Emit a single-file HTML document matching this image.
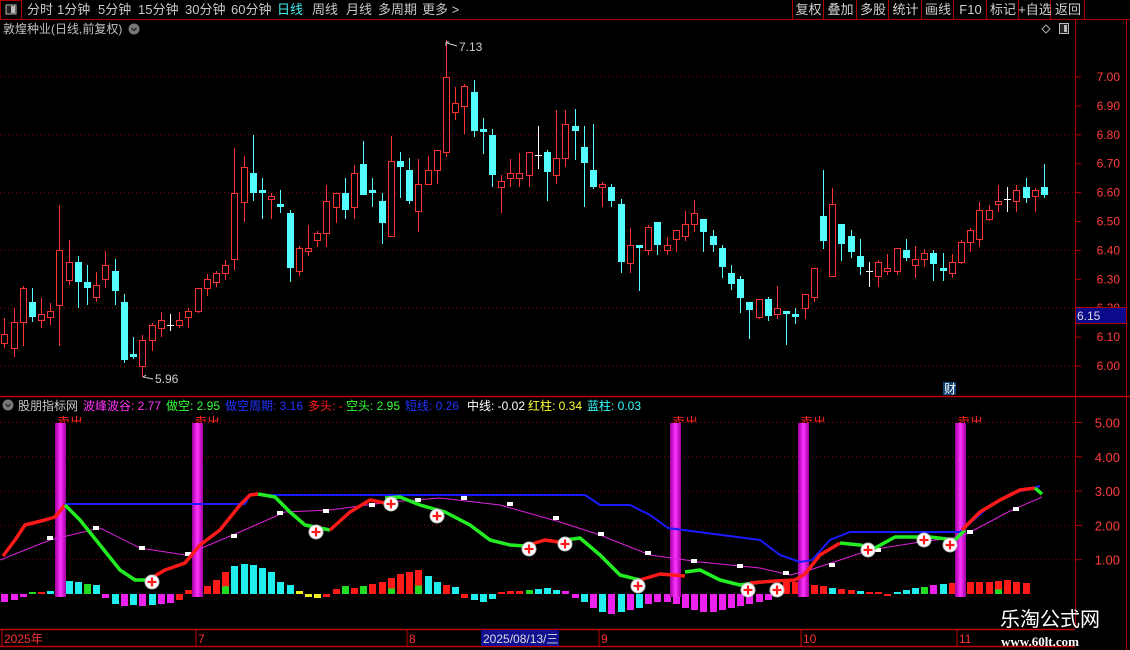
<!DOCTYPE html>
<html><head><meta charset="utf-8">
<style>
*{margin:0;padding:0;box-sizing:border-box}
body{width:1130px;height:650px;background:#000;overflow:hidden;font-family:"Liberation Sans","Noto Sans CJK SC",sans-serif;position:relative;color:#c8c8c8}
</style></head><body>
<svg id="s" width="1130" height="650" style="position:absolute;left:0;top:0" xmlns="http://www.w3.org/2000/svg" font-family="Liberation Sans, Noto Sans CJK SC, sans-serif"></svg>
<script>
var S=document.getElementById('s'),o=[];
function r(x,y,w,h,f,st){o.push('<rect x="'+x+'" y="'+y+'" width="'+w+'" height="'+h+'" fill="'+f+'"'+(st?' stroke="'+st+'" stroke-width="1"':'')+'/>');}
function l(x1,y1,x2,y2,c,w,d){o.push('<line x1="'+x1+'" y1="'+y1+'" x2="'+x2+'" y2="'+y2+'" stroke="'+c+'" stroke-width="'+(w||1)+'"'+(d?' stroke-dasharray="'+d+'"':'')+'/>');}
function t(x,y,s,c,fs,anc,ex){o.push('<text x="'+x+'" y="'+y+'" fill="'+c+'" font-size="'+(fs||12)+'"'+(anc?' text-anchor="'+anc+'"':'')+(ex||'')+'>'+s+'</text>');}
o.push('<defs><linearGradient id="mg" x1="0" x2="1"><stop offset="0" stop-color="#a000a0"/><stop offset=".5" stop-color="#ff33ff"/><stop offset="1" stop-color="#a000a0"/></linearGradient><clipPath id="cp"><rect x="0" y="398" width="1075" height="25"/></clipPath></defs>');
l(0,19.5,1130,19.5,'#b00000');
r(0.5,0.5,21,19,'none','#b00000');
r(6,5,10,9,'#222','#bbb');r(11,6,4,7,'#bbb');
var tb=[['分时',27],['1分钟',57],['5分钟',98],['15分钟',138],['30分钟',185],['60分钟',231],['日线',277,'#4ee'],['周线',312],['月线',346],['多周期',378],['更多 >',422]];
tb.forEach(function(a){t(a[1],14,a[0],a[2]||'#c8c8c8',13);});
var sep=[792,823,856,888,921,953,986,1018,1050,1084];
sep.forEach(function(x){l(x+.5,0,x+.5,19,'#b00000');});
var bt=['复权','叠加','多股','统计','画线','F10','标记','+自选','返回'];
bt.forEach(function(b,i){t((sep[i]+sep[i+1])/2+1,14,b,'#d0d0d0',13,'middle');});
l(1075.5,20,1075.5,628,'#b00000');l(1126.5,20,1126.5,650,'#b00000');
l(0,396.5,1130,396.5,'#c00000',1.5);
t(3,33,'敦煌种业(日线,前复权)','#c0c0c0',12);
o.push('<circle cx="134" cy="29" r="5.5" fill="#777"/><path d="M131.5,28 L134,30.5 L136.5,28" stroke="#222" fill="none" stroke-width="1.3"/>');
o.push('<path d="M1046,25 L1050,29 L1046,33 L1042,29Z" fill="none" stroke="#aaa"/>');
r(1059.5,23.5,9,10,'#222','#bbb');r(1064,25,3,7,'#bbb');
function py(p){return 366-(p-6)*289;}
[6,6.2,6.4,6.6,6.8,7].forEach(function(p){l(0,py(p),1075,py(p),'#8a0000',1,'1 3');});
for(var p=6;p<=7.01;p+=0.1){var y=py(p);t(1120,y+4,p.toFixed(2),'#ff3c3c',12,'end');l(1075,y,1081,y,'#b00000');}
r(1075.5,307.5,51,16,'#0a0a8a','#b00000');t(1077,320,'6.15','#ddd',12);
var C=[[334,343,318,348,'r'],[322,348,308,357,'r'],[288,322,286,346,'r'],[302,317,288,322,'c'],[314,320,298,328,'r'],[311,317,303,325,'r'],[250,305,205,346,'r'],[262,280,240,285,'r'],[262,282,256,308,'c'],[282,288,265,305,'c'],[285,297,272,302,'r'],[265,279,251,288,'r'],[271,291,259,305,'c'],[302,360,294,363,'c'],[354,357,337,359,'c'],[340,366,335,377,'r'],[325,340,323,351,'r'],[320,328,312,337,'r'],[325,325,314,331,'w'],[320,325,312,328,'r'],[311,317,308,328,'r'],[288,311,288,313,'r'],[279,288,274,296,'r'],[273,282,271,287,'r'],[265,273,260,280,'r'],[193,259,148,270,'r'],[167,202,156,222,'r'],[173,193,135,201,'c'],[190,193,178,219,'c'],[196,199,193,219,'r'],[204,207,190,213,'c'],[213,268,210,282,'c'],[248,271,246,276,'r'],[248,251,225,256,'r'],[233,240,231,247,'r'],[201,233,185,247,'r'],[193,207,193,223,'r'],[193,210,178,219,'c'],[173,207,165,219,'r'],[164,195,141,195,'c'],[190,193,178,207,'c'],[201,223,193,244,'c'],[161,236,136,236,'r'],[161,167,152,198,'c'],[170,201,158,204,'c'],[184,211,159,232,'r'],[170,184,156,184,'r'],[150,170,150,184,'r'],[77,152,40,157,'r'],[103,112,87,120,'r'],[86,106,84,134,'r'],[92,131,80,137,'c'],[129,131,118,154,'c'],[135,175,129,187,'c'],[181,187,175,213,'r'],[173,178,159,187,'r'],[173,178,153,187,'r'],[152,175,152,187,'r'],[155,155,126,169,'w'],[152,172,150,201,'c'],[158,175,110,184,'r'],[124,158,110,167,'r'],[126,131,109,160,'c'],[147,163,126,207,'c'],[170,187,124,189,'c'],[184,187,182,207,'r'],[187,201,184,207,'c'],[204,262,199,273,'c'],[245,263,228,273,'r'],[245,247,245,291,'c'],[227,250,225,255,'r'],[222,245,222,255,'c'],[245,250,237,255,'r'],[230,239,230,252,'r'],[224,236,211,241,'r'],[213,224,200,232,'r'],[219,232,219,252,'c'],[236,245,230,252,'c'],[248,267,245,278,'c'],[273,284,265,290,'c'],[279,298,276,313,'c'],[302,310,302,339,'c'],[299,317,299,319,'r'],[299,316,297,321,'c'],[308,314,286,319,'r'],[311,313,311,345,'c'],[314,316,308,324,'c'],[294,308,294,319,'r'],[268,297,268,302,'r'],[216,241,170,249,'c'],[204,276,188,276,'r'],[224,244,224,261,'c'],[236,252,230,258,'c'],[256,267,239,275,'c'],[271,271,262,287,'w'],[262,276,260,287,'r'],[268,271,254,275,'r'],[248,271,248,275,'r'],[250,258,239,261,'c'],[259,265,246,278,'r'],[253,259,249,267,'r'],[253,264,250,281,'c'],[268,270,253,281,'c'],[262,273,254,278,'r'],[242,262,240,264,'r'],[230,242,228,252,'r'],[210,239,202,247,'r'],[210,219,205,221,'r'],[201,204,185,212,'r'],[199,199,187,212,'w'],[190,201,185,212,'r'],[187,198,178,203,'c'],[190,196,188,212,'r'],[187,195,164,198,'c']];
C.forEach(function(c,i){var x=Math.round(4.3+9.2*i);var col=c[4]=='r'?'#ff3232':c[4]=='c'?'#54ffff':'#ffffff';
l(x+.5,c[2],x+.5,c[3],col);
if(c[4]=='w'){l(x-3,c[0]+.5,x+4,c[0]+.5,col);}
else if(c[4]=='r'){r(x-2.5,c[0]+.5,6,Math.max(c[1]-c[0],2),'#000',col);}
else r(x-3,c[0],7,Math.max(c[1]-c[0],3),col);});
o.push('<path d="M446,42 L446,46 M446,42 L449,42 M447,43 L457,46" stroke="#ccc" fill="none"/>');t(459,51,'7.13','#ccc',12);
o.push('<path d="M143,377 L153,379 M143,377 L146,375" stroke="#ccc" fill="none"/>');t(155,383,'5.96','#ccc',12);
r(943,382,13,13,'#0d3f70');t(944,393,'财','#fff',12);
function iy(v){return 594-v*34.3;}
[5,4,3,2,1].forEach(function(v){l(0,iy(v),1075,iy(v),'#8a0000',1,'1 3');t(1120,iy(v)+5,v.toFixed(2),'#ff3c3c',13,'end');l(1075,iy(v),1082,iy(v),'#b00000');});
o.push('<circle cx="8" cy="405" r="5.5" fill="#777"/><path d="M5.5,404 L8,406.5 L10.5,404" stroke="#222" fill="none" stroke-width="1.3"/>');
var lg=[['股朋指标网','#c8c8c8',18],['波峰波谷: 2.77','#ff33ff',83],['做空: 2.95','#33ff33',166],['做空周期: 3.16','#2233ff',225],['多头: -','#ff2020',308],['空头: 2.95','#33ff33',346],['短线: 0.26','#2233ff',405],['中线: -0.02','#ffffff',467],['红柱: 0.34','#ffff33',528],['蓝柱: 0.03','#33ffff',587]];
lg.forEach(function(a){t(a[2],410,a[0],a[1],12);});
var H=[-8,-6,-3,2,2,3,14,13,12,10,9,-4,-10,-12,-11,-12,-11,-10,-9,-6,4,6,8,14,22,28,30,29,26,22,12,9,3,-3,-4,-3,5,8,6,8,10,12,16,20,22,24,18,12,9,7,-4,-6,-8,-5,2,3,3,4,5,6,4,3,-4,-8,-14,-18,-20,-18,-16,-14,-10,-8,-8,-10,-14,-16,-18,-18,-16,-14,-12,-10,-8,-6,10,12,12,10,9,8,6,5,4,3,2,2,-2,2,4,6,7,9,10,11,12,12,12,12,13,14,12,11];
var HC='mmmgrcrccgcmcmcmcmmrrrrrrcccccccyyyrrgrgrrrrrrccrcrcccrrrgcccmmcmcmcmcmmmmmmmmmmmmmmmrrrrrcrrcrrrcccgmcrrrrrrrrrcccc';
H.forEach(function(h,i){var x=Math.round(4.3+9.2*i)-3;var ch=HC[i]||'r';var col={r:'#ff1a1a',c:'#22eeee',g:'#22dd22',y:'#eeee22',m:'#ee22ee'}[ch];
if(h>=0)r(x,594-h,7,h,col);else r(x,594,7,-h,col);
if(h>12&&ch=='r'&&i%3==0)r(x,594-h*0.35,7,h*0.35,'#22dd22');});
[55,192,670,798,955].forEach(function(x){r(x,423,11,174,'url(#mg)');t(x+2,427,'卖出','#ff2020',13,null,' clip-path="url(#cp)"');});
o.push('<polyline points="65,504 245,504 250,495 585,495 600,505 630,505 650,515 668,528 760,540 780,555 800,562 812,560 830,540 850,532 960,532 985,510 1010,494 1040,486" fill="none" stroke="#1a1aff" stroke-width="2"/>');
var mp=[[0,560],[50,540],[100,528],[140,548],[185,555],[240,532],[285,512],[330,510],[390,502],[440,498],[500,505],[560,522],[600,535],[650,555],[700,562],[760,568],[790,575],[810,570],[840,560],[870,550],[920,542],[960,537],[980,527],[1010,511],[1042,497]];
o.push('<polyline points="'+mp.map(function(p){return p.join(',')}).join(' ')+'" fill="none" stroke="#dd22dd" stroke-width="1"/>');
[[50,538],[96,528],[142,548],[188,554],[234,536],[280,513],[326,511],[372,505],[418,500],[464,498],[510,504],[556,518],[601,534],[648,553],[694,561],[740,566],[786,573],[832,565],[878,550],[924,542],[970,532],[1016,509]].forEach(function(p){r(p[0]-3,p[1]-2,6,4,'#fff');});
function pl(pts,c){o.push('<polyline points="'+pts.map(function(p){return p.join(',')}).join(' ')+'" fill="none" stroke="'+c+'" stroke-width="3.5" stroke-linejoin="round"/>');}
pl([[3,556],[15,540],[25,525],[45,520],[55,517],[65,505]],'#ff1a1a');
pl([[65,505],[80,520],[100,545],[120,570],[135,580],[148,580]],'#22ee22');
pl([[148,580],[165,570],[185,563],[200,545],[220,530],[240,505],[250,495],[258,494]],'#ff1a1a');
pl([[258,494],[275,497],[290,512],[305,525],[330,530]],'#22ee22');
pl([[330,530],[350,512],[370,500],[385,503]],'#ff1a1a');
pl([[385,498],[400,497],[420,505],[445,512],[470,525],[490,540],[510,545],[525,546]],'#22ee22');
pl([[525,546],[545,540],[565,543]],'#ff1a1a');
pl([[565,540],[580,538],[600,555],[620,575],[640,580]],'#22ee22');
pl([[640,580],[660,574],[685,576]],'#ff1a1a');
pl([[685,572],[700,570],[720,580],[740,585],[760,582]],'#22ee22');
pl([[750,583],[775,581],[795,580],[805,574]],'#ff1a1a');
pl([[805,574],[820,555],[840,543]],'#ff1a1a');
pl([[840,543],[860,545],[875,548],[895,537],[930,537],[955,540],[965,530]],'#22ee22');
pl([[962,530],[980,512],[1000,500],[1020,490],[1035,488]],'#ff1a1a');
pl([[1035,488],[1042,494]],'#22ee22');
[[152,582],[316,532],[391,504],[437,516],[529,549],[565,544],[638,586],[748,590],[777,590],[868,550],[924,540],[950,545]].forEach(function(p){o.push('<circle cx="'+p[0]+'" cy="'+p[1]+'" r="7" fill="#fff" stroke="#bbb"/>');l(p[0]-4.5,p[1],p[0]+4.5,p[1],'#ff1a1a',2.2);l(p[0],p[1]-4.5,p[0],p[1]+4.5,'#ff1a1a',2.2);});
l(0,629.5,1075,629.5,'#c00000',1.5);l(0,646.5,1075,646.5,'#c00000',1.5);
[[3,'2025年'],[197,'7'],[408,'8'],[600,'9'],[802,'10'],[958,'11']].forEach(function(a){l(a[0]-1,630,a[0]-1,646,'#c00000');t(a[0]+1,643,a[1],'#ff3030',12);});
r(481,630,78,16,'#101090');t(483,643,'2025/08/13/三','#ddd',12);
t(1000,626,'乐淘公式网','#ffffff',20);
o.push('<text x="1001" y="646" fill="#ffffff" font-size="13" font-family="Liberation Serif, serif" font-weight="bold">www.60lt.com</text>');
S.innerHTML=o.join('');
</script>
</body></html>
